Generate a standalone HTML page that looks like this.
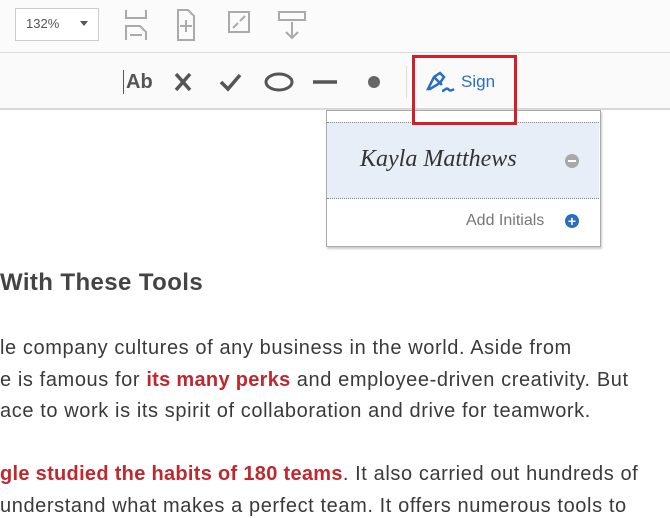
<!DOCTYPE html><html><head><style>
body{margin:0;width:670px;height:509px;overflow:hidden;background:#fff;font-family:"Liberation Sans",sans-serif;position:relative}
.a{position:absolute}
.t{position:absolute;left:0;white-space:nowrap;font-size:20px;letter-spacing:0.6px;color:#3a3a3a}
.r{color:#c0282d;font-weight:bold;letter-spacing:0.3px}
</style></head><body>
<div class="a" style="left:0;top:0;width:670px;height:52px;background:#fbfbfb;border-bottom:1px solid #dcdcdc"></div>
<div class="a" style="left:15px;top:8px;width:82px;height:31px;border:1px solid #ccc;background:#fff"></div>
<div class="a" style="left:26px;top:16px;font-size:13px;color:#555">132%</div>
<div class="a" style="left:80px;top:21px;width:0;height:0;border-left:4px solid transparent;border-right:4px solid transparent;border-top:5px solid #555"></div>
<svg class="a" style="left:120px;top:8px" width="190" height="34" fill="none" stroke="#aaa" stroke-width="2">
<path d="M6 2v8h20V2M6 32V18h14l6 6v8M10 27h12"/>
<path d="M58 2h10l6 6v24H58z M66 12v12M60 18h12"/>
<rect x="109" y="4" width="20" height="20"/><path d="M113 20l5-5M125 8l-5 5"/>
<rect x="159" y="4" width="26" height="8"/><path d="M172 14v16M166 24l6 6 6-6"/>
</svg>
<div class="a" style="left:0;top:53px;width:670px;height:55px;background:#fafafa;border-bottom:2px solid #d8d8d8"></div>
<div class="a" style="left:126px;top:71px;font-size:20px;font-weight:bold;color:#555">Ab</div>
<div class="a" style="left:123px;top:70px;width:1px;height:24px;background:#555"></div>
<svg class="a" style="left:170px;top:68px" width="220" height="28" fill="none" stroke="#555" stroke-width="3.5">
<path d="M6 6l14 16M20 6L6 22"/>
<path d="M51 14l7 7 12-14"/>
<ellipse cx="109" cy="14" rx="13" ry="8" stroke-width="3"/>
<path d="M143 14h24"/>
<circle cx="204" cy="14" r="6" fill="#666" stroke="none"/>
</svg>
<div class="a" style="left:406px;top:66px;width:1px;height:32px;background:#ddd"></div>
<svg class="a" style="left:424px;top:67px" width="34" height="28" fill="none" stroke="#2a6ec0" stroke-width="2.5"><path d="M4 22l6-12 6-4 4 4-4 6-10 6zM10 10l8 8M18 24c3 0 4-4 6-2s3 2 6 0"/></svg>
<div class="a" style="left:461px;top:72px;font-size:17px;color:#2a6ec0">Sign</div>
<div class="a" style="left:326px;top:110px;width:273px;height:135px;background:#fff;border:1px solid #aaa;box-shadow:1px 2px 2px #ccc"></div>
<div class="a" style="left:327px;top:122px;width:272px;height:75px;background:#e8eef8;border-top:1px dotted #888;border-bottom:1px dotted #888"></div>
<div class="a" style="left:360px;top:146px;font-family:'Liberation Serif',serif;font-style:italic;font-size:24px;color:#333">Kayla Matthews</div>
<div class="a" style="left:565px;top:154px;width:14px;height:14px;border-radius:50%;background:#a8a8a8"></div>
<div class="a" style="left:568px;top:160px;width:8px;height:2px;background:#fff"></div>
<div class="a" style="left:466px;top:212px;font-size:16px;color:#777">Add Initials</div>
<div class="a" style="left:565px;top:214px;width:14px;height:14px;border-radius:50%;background:#2a6ec0;color:#fff;font-size:14px;line-height:14px;text-align:center;font-weight:bold">+</div>
<div class="a" style="left:412px;top:55px;width:99px;height:64px;border:3px solid #d41f26"></div>
<div class="t" style="top:269px;font-size:24px;letter-spacing:0.4px;font-weight:bold;color:#444">With These Tools</div>
<div class="t" style="top:337px">le company cultures of any business in the world. Aside from</div>
<div class="t" style="top:369px">e is famous for <span class="r">its many perks</span> and employee-driven creativity. But</div>
<div class="t" style="top:400px">ace to work is its spirit of collaboration and drive for teamwork.</div>
<div class="t" style="top:463px"><span class="r">gle studied the habits of 180 teams</span>. It also carried out hundreds of</div>
<div class="t" style="top:495px">understand what makes a perfect team. It offers numerous tools to</div>
</body></html>
